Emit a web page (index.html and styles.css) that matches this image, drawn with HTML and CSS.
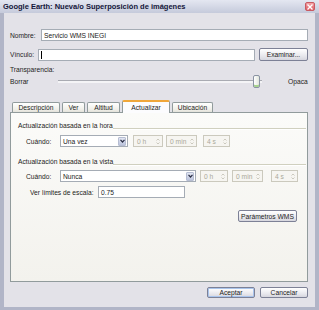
FILE: index.html
```html
<!DOCTYPE html>
<html lang="es">
<head>
<meta charset="utf-8">
<title>Google Earth: Nueva/o Superposición de imágenes</title>
<link rel="stylesheet" href="styles.css">
</head>
<body>
<div class="window">
  <div class="titlebar">
    <span class="title">Google Earth: Nueva/o Superposición de imágenes</span>
    <span class="close"><svg width="6" height="6" viewBox="0 0 6 6"><path d="M0.5 0.5L5.5 5.5M5.5 0.5L0.5 5.5" stroke="#fff" stroke-width="1.4"/></svg></span>
  </div>
  <div class="frame">
    <div class="row r-name">
      <span class="lbl lbl-name">Nombre:</span>
      <div class="input grow">Servicio WMS INEGI</div>
    </div>
    <div class="row r-link">
      <span class="lbl lbl-link">Vínculo:</span>
      <div class="input grow"><span class="caret"></span></div>
      <button class="btn btn-browse">Examinar...</button>
    </div>
    <div class="trans">Transparencia:</div>
    <div class="row r-slider">
      <span class="lbl lbl-borrar">Borrar</span>
      <div class="slider"><span class="thumb"></span></div>
      <span class="opaca">Opaca</span>
    </div>
    <div class="tabs">
      <span class="tab t1">Descripción</span>
      <span class="tab t2">Ver</span>
      <span class="tab t3">Altitud</span>
      <span class="tab t4 active">Actualizar</span>
      <span class="tab t5">Ubicación</span>
    </div>
    <div class="panel">
      <div class="ghead"><span>Actualización basada en la hora</span><span class="gline"></span></div>
      <div class="row prow">
        <span class="lbl lbl-when">Cuándo:</span>
        <div class="select sel1"><span>Una vez</span><span class="arrow"><svg width="5" height="4" viewBox="0 0 5 4"><path d="M0.5 0.8L2.5 3L4.5 0.8" fill="none" stroke="#2b2f45" stroke-width="1.2"/></svg></span></div>
        <div class="spin s1a"><span>0 h</span><span class="sarr"><svg width="4" height="7" viewBox="0 0 4 7"><path d="M0.5 2.5L2 1L3.5 2.5M0.5 4.5L2 6L3.5 4.5" fill="none" stroke="#c6c4b8" stroke-width="0.9"/></svg></span></div>
        <div class="spin s1b"><span>0 min</span><span class="sarr"><svg width="4" height="7" viewBox="0 0 4 7"><path d="M0.5 2.5L2 1L3.5 2.5M0.5 4.5L2 6L3.5 4.5" fill="none" stroke="#c6c4b8" stroke-width="0.9"/></svg></span></div>
        <div class="spin s1c"><span>4 s</span><span class="sarr"><svg width="4" height="7" viewBox="0 0 4 7"><path d="M0.5 2.5L2 1L3.5 2.5M0.5 4.5L2 6L3.5 4.5" fill="none" stroke="#c6c4b8" stroke-width="0.9"/></svg></span></div>
      </div>
      <div class="ghead g2"><span>Actualización basada en la vista</span><span class="gline"></span></div>
      <div class="row prow p2">
        <span class="lbl lbl-when">Cuándo:</span>
        <div class="select sel2"><span>Nunca</span><span class="arrow"><svg width="5" height="4" viewBox="0 0 5 4"><path d="M0.5 0.8L2.5 3L4.5 0.8" fill="none" stroke="#2b2f45" stroke-width="1.2"/></svg></span></div>
        <div class="spin s2a"><span>0 h</span><span class="sarr"><svg width="4" height="7" viewBox="0 0 4 7"><path d="M0.5 2.5L2 1L3.5 2.5M0.5 4.5L2 6L3.5 4.5" fill="none" stroke="#c6c4b8" stroke-width="0.9"/></svg></span></div>
        <div class="spin s2b"><span>0 min</span><span class="sarr"><svg width="4" height="7" viewBox="0 0 4 7"><path d="M0.5 2.5L2 1L3.5 2.5M0.5 4.5L2 6L3.5 4.5" fill="none" stroke="#c6c4b8" stroke-width="0.9"/></svg></span></div>
        <div class="spin s2c"><span>4 s</span><span class="sarr"><svg width="4" height="7" viewBox="0 0 4 7"><path d="M0.5 2.5L2 1L3.5 2.5M0.5 4.5L2 6L3.5 4.5" fill="none" stroke="#c6c4b8" stroke-width="0.9"/></svg></span></div>
      </div>
      <div class="row prow p3">
        <span class="lbl lbl-scale">Ver límites de escala:</span>
        <div class="input scale">0.75</div>
      </div>
      <button class="btn btn-wms">Parámetros WMS</button>
    </div>
    <div class="footer">
      <button class="btn btn-ok">Aceptar</button>
      <button class="btn btn-cancel">Cancelar</button>
    </div>
  </div>
</div>
</body>
</html>
```

FILE: styles.css
```css
* { box-sizing: border-box; margin: 0; padding: 0; }
body {
  margin: 0;
  width: 319px;
  height: 310px;
  overflow: hidden;
  font-family: "Liberation Sans", Arial, sans-serif;
  font-size: 6.7px;
  color: #1d1d22;
  background: #e3e2e8;
}
.window { width: 319px; height: 310px; display: flex; flex-direction: column; }
.titlebar {
  height: 13px;
  flex: none;
  display: flex;
  align-items: center;
  justify-content: space-between;
  padding: 0 4px 0 3px;
  background: linear-gradient(#e4e7f1, #c5cadb);
  font-weight: bold;
  font-size: 7.5px;
  color: #14163a;
}
.close {
  width: 10px;
  height: 9px;
  border-radius: 2px;
  border: 1px solid #c85a62;
  background: linear-gradient(#f3a2a6, #dc5c63);
  display: flex;
  align-items: center;
  justify-content: center;
}
.frame {
  flex: 1;
  display: flex;
  flex-direction: column;
  border-style: solid;
  border-color: #b1b5c7;
  border-width: 0 4px 3px 4px;
  padding: 16px 7px 0 6px;
  background: #e3e2e8;
}
.row { display: flex; align-items: center; }
.grow { flex: 1; }
.input {
  height: 12px;
  background: #fff;
  border: 1px solid #a5acb5;
  display: flex;
  align-items: center;
  padding-left: 2px;
  white-space: nowrap;
}
.r-name { height: 12px; }
.lbl-name { width: 31px; }
.r-link { margin-top: 7px; height: 13px; }
.lbl-link { width: 28px; }
.caret { width: 1px; height: 8px; background: #000; }
.btn {
  font-family: inherit;
  font-size: 6.7px;
  color: #1d1d22;
  border: 1px solid #7d8196;
  border-radius: 2px;
  background: linear-gradient(#ffffff, #e9e9ee 60%, #d6d6de);
  display: flex;
  align-items: center;
  justify-content: center;
  white-space: nowrap;
}
.btn-browse { width: 49px; height: 13px; margin-left: 4px; }
.trans { margin-top: 4px; line-height: 9px; height: 9px; }
.r-slider { margin-top: 1px; height: 13px; }
.lbl-borrar { width: 48px; }
.slider {
  width: 204px;
  height: 13px;
  display: flex;
  justify-content: flex-end;
  align-items: center;
  padding-right: 2px;
  background: linear-gradient(transparent 5px, #a9abb2 5px, #a9abb2 6px, #f4f4f6 6px, #f4f4f6 8px, transparent 8px);
}
.thumb {
  width: 7px;
  height: 13px;
  border: 1px solid #8a93a2;
  border-radius: 2px;
  background: linear-gradient(90deg, #ffffff, #e1e6dc);
  box-shadow: inset 0 -2px 0 #a8d48f;
}
.opaca { margin-left: 26px; }
.tabs {
  margin-top: 12px;
  height: 12px;
  display: flex;
  align-items: flex-end;
  padding-left: 2px;
  gap: 2px;
}
.tab {
  height: 10px;
  border: 1px solid #919b9c;
  border-bottom: none;
  border-radius: 2px 2px 0 0;
  background: linear-gradient(#ffffff, #f0efe9 70%, #e3e2da);
  display: flex;
  align-items: center;
  justify-content: center;
}
.t1 { width: 48px; }
.t2 { width: 23px; }
.t3 { width: 33px; }
.t4 { width: 48px; }
.t5 { width: 41px; }
.tab.active {
  height: 13px;
  margin-bottom: -1px;
  position: relative;
  background: #fcfcfe;
  border-top: 2px solid #f0a73a;
  padding-bottom: 1px;
}
.panel {
  height: 170px;
  border: 1px solid #919b9c;
  background: linear-gradient(#fbfbf9, #f3f2ed);
  display: flex;
  flex-direction: column;
  padding: 8px 1px 0 7px;
}
.ghead { display: flex; align-items: center; height: 9px; line-height: 9px; white-space: nowrap; }
.gline {
  flex: 1;
  height: 2px;
  border-top: 1px solid #d0d0bf;
  border-bottom: 1px solid #ffffff;
  margin-top: 6px;
}
.g2 { margin-top: 10px; }
.prow { margin-top: 5px; height: 12px; padding-left: 8px; }
.p2 { margin-top: 4px; }
.p3 { margin-top: 4px; padding-left: 12px; }
.lbl-when { width: 34px; }
.lbl-scale { width: 68px; }
.select {
  height: 12px;
  background: #fff;
  border: 1px solid #a5acb5;
  display: flex;
  align-items: center;
  justify-content: space-between;
  padding: 1px 1px 1px 2px;
}
.sel1 { width: 68px; }
.sel2 { width: 136px; }
.arrow {
  width: 8px;
  height: 9px;
  border-radius: 1px;
  border: 1px solid #b6bdd2;
  background: linear-gradient(#e2e6f3, #bcc4dc);
  display: flex;
  align-items: center;
  justify-content: center;
}
.spin {
  height: 12px;
  border: 1px solid #cbc9bd;
  background: #f6f5f1;
  color: #aaa899;
  display: flex;
  align-items: center;
  justify-content: space-between;
  padding: 0 2px 0 3px;
  white-space: nowrap;
}
.sarr { display: flex; align-items: center; }
.s1a { width: 30px; margin-left: 5px; }
.s1b { width: 31px; margin-left: 3px; }
.s1c { width: 27px; margin-left: 6px; }
.s2a { width: 28px; margin-left: 4px; }
.s2b { width: 31px; margin-left: 4px; }
.s2c { width: 27px; margin-left: 8px; }
.scale { width: 87px; }
.btn-wms { align-self: flex-end; margin-top: 12px; margin-right: 9px; width: 59px; height: 12px; }
.footer { margin-top: 5px; display: flex; justify-content: flex-end; gap: 5px; }
.btn-ok, .btn-cancel { width: 48px; height: 11px; }
.btn-ok { box-shadow: inset 0 0 0 1px #a9c4ec; }
```
